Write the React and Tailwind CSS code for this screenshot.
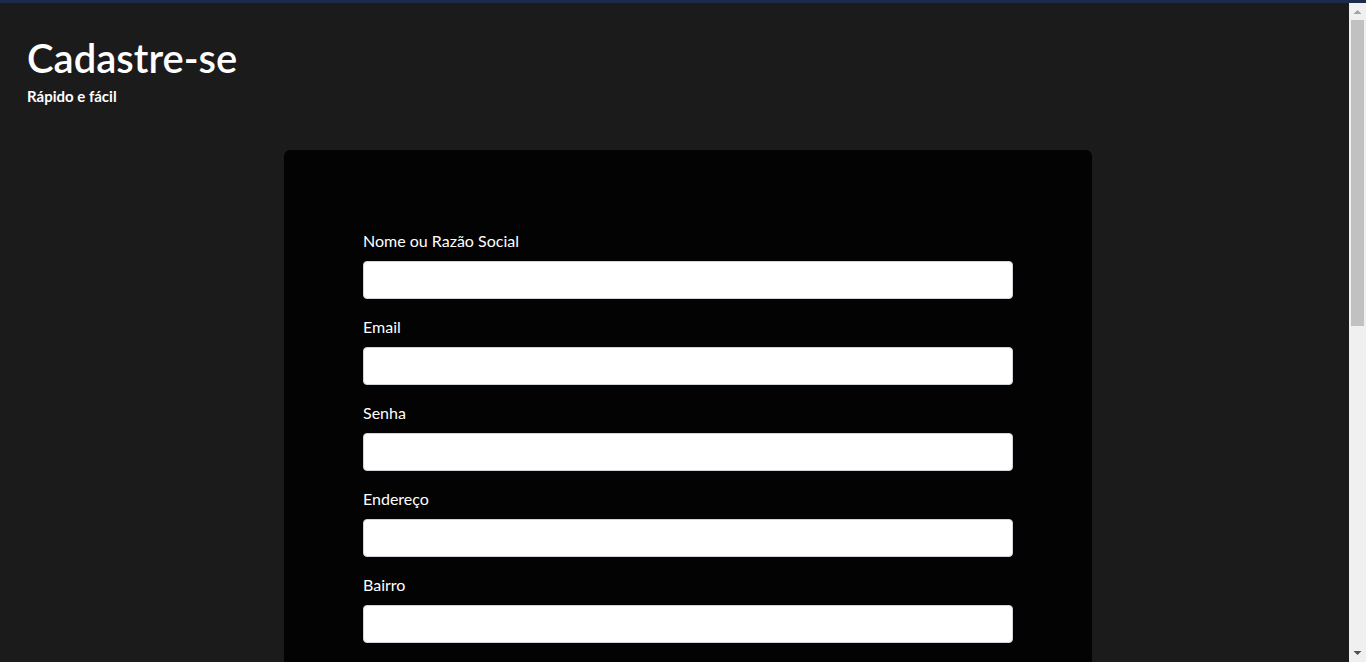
import React from 'react';

const fields = ['Nome ou Razão Social', 'Email', 'Senha', 'Endereço', 'Bairro'];

// barra de rolagem do navegador, como aparece na captura
const Scrollbar = () => (
  <div className="fixed right-0 top-[3px] bottom-0 flex w-[17px] flex-col items-center bg-[#f0f0f0]">
    <svg width="17" height="17" viewBox="0 0 17 17" className="shrink-0">
      <path d="M4.5 11h8l-4-4z" fill="#a3a3a3" />
    </svg>
    <div className="h-[306px] w-[13px] bg-[#c1c1c1]" />
    <div className="flex-1" />
    <svg width="17" height="17" viewBox="0 0 17 17" className="shrink-0">
      <path d="M4.5 6h8l-4 4z" fill="#505050" />
    </svg>
  </div>
);

const App = () => {
  return (
    <div
      className="min-h-screen bg-[#1c1b1c] text-white"
      style={{ fontFamily: 'Lato, "Open Sans", sans-serif' }}
    >
      <div className="h-[3px] bg-[#1c2a4e]" />

      <div className="px-[27px] pt-[31px]">
        <h1 className="text-[40px] leading-[1.2] font-semibold">Cadastre-se</h1>
        <p className="mt-[3px] text-[15px] font-bold">Rápido e fácil</p>
      </div>

      <div className="ml-[284px] mt-[42px] w-[808px] rounded-md bg-[#030303] px-[79px] pt-[79px] pb-[60px]">
        <form>
          {fields.map((label) => (
            <div key={label} className="mb-4">
              <label className="mb-2 block text-base leading-6">{label}</label>
              <input
                type={label === 'Senha' ? 'password' : 'text'}
                className="block h-[38px] w-full rounded border border-[#ced4da] bg-white px-3 text-black"
              />
            </div>
          ))}
        </form>
      </div>

      <Scrollbar />
    </div>
  );
};

export default App;
